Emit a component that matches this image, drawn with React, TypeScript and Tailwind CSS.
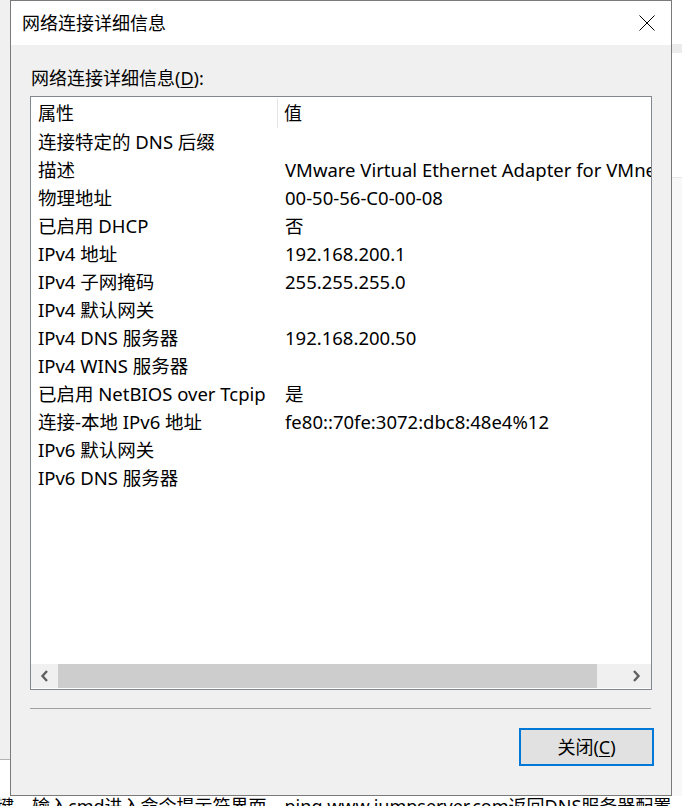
import React from "react";

const rows: [string, string][] = [
  ["连接特定的 DNS 后缀", ""],
  ["描述", "VMware Virtual Ethernet Adapter for VMnet8"],
  ["物理地址", "00-50-56-C0-00-08"],
  ["已启用 DHCP", "否"],
  ["IPv4 地址", "192.168.200.1"],
  ["IPv4 子网掩码", "255.255.255.0"],
  ["IPv4 默认网关", ""],
  ["IPv4 DNS 服务器", "192.168.200.50"],
  ["IPv4 WINS 服务器", ""],
  ["已启用 NetBIOS over Tcpip", "是"],
  ["连接-本地 IPv6 地址", "fe80::70fe:3072:dbc8:48e4%12"],
  ["IPv6 默认网关", ""],
  ["IPv6 DNS 服务器", ""],
];

const font = { fontFamily: "'Noto Sans', 'Noto Sans CJK SC', sans-serif" };

function Chevron({ dir }: { dir: "left" | "right" }) {
  return (
    <svg width="10" height="12" viewBox="0 0 10 12">
      <path
        d={dir === "left" ? "M7 1 L2.5 6 L7 11" : "M3 1 L7.5 6 L3 11"}
        fill="none"
        stroke="#606060"
        strokeWidth="2.4"
      />
    </svg>
  );
}

export default function App() {
  return (
    <div className="relative h-[806px] w-[682px] overflow-hidden bg-white text-[18px] text-black" style={font}>
      <div className="flex h-[796px]">
        {/* page behind, left */}
        <div className="flex w-[10px] flex-col">
          <div className="h-[760px] border-b border-[#b4b4b4] bg-[#f0f0f0]" />
          <div className="flex-1 bg-white" />
        </div>

        {/* dialog */}
        <div className="flex w-[662px] flex-col border border-[#7a7a7a] bg-[#f0f0f0]">
          <div className="flex h-[44px] shrink-0 items-center justify-between bg-white pl-[11px] pr-[16px]">
            <span className="leading-none">网络连接详细信息</span>
            <svg width="16" height="16" viewBox="0 0 16 16">
              <path d="M0.5 0.5 L15.5 15.5 M15.5 0.5 L0.5 15.5" stroke="#000" strokeWidth="1" />
            </svg>
          </div>

          <div className="flex flex-1 flex-col pl-[19px] pr-[19px]">
            <div className="mt-[19px] h-[32px] pl-[1px] leading-[28px]">
              网络连接详细信息(<span className="underline underline-offset-2">D</span>):
            </div>

            <div className="flex h-[594px] flex-col border border-[#828790] bg-white">
              <div className="flex-1 overflow-hidden pt-[1px]">
                <div className="flex h-[30px] items-center">
                  <div className="w-[247px] border-r border-[#e5e5e5] pl-[7px] leading-[30px]">属性</div>
                  <div className="pl-[6px] leading-[30px]">值</div>
                </div>
                {rows.map(([k, v]) => (
                  <div key={k} className="flex h-[28px] items-center whitespace-nowrap text-[18.5px]">
                    <div className="w-[248px] shrink-0 pl-[7px]">{k}</div>
                    <div className="pl-[6px]">{v}</div>
                  </div>
                ))}
              </div>
              <div className="mb-[1px] flex h-[24px] shrink-0 items-stretch bg-[#f0f0f0]">
                <div className="flex w-[27px] items-center justify-center">
                  <Chevron dir="left" />
                </div>
                <div className="w-[539px] bg-[#cdcdcd]" />
                <div className="flex-1" />
                <div className="flex w-[30px] items-center justify-center">
                  <Chevron dir="right" />
                </div>
              </div>
            </div>

            <div className="mt-[18px] mr-[1px] h-px bg-[#a0a0a0]" />

            <div className="mt-[19px] flex justify-end">
              <button className="-mr-[2px] flex h-[38px] w-[135px] items-center justify-center border-2 border-[#0078d7] bg-[#e1e1e1]">
                关闭(<span className="underline underline-offset-2">C</span>)
              </button>
            </div>
          </div>
        </div>

        {/* page behind, right */}
        <div className="flex w-[10px] flex-col">
          <div className="h-[44px] bg-white" />
          <div className="h-[9px] bg-[#ececec]" />
          <div className="h-[124px] bg-white" />
          <div className="flex-1 border-t border-[#e8e8e8] bg-[#f8f8f8]" />
        </div>
      </div>

      <div className="-ml-[4px] whitespace-nowrap text-[18px] leading-[20px]">
        键，输入cmd进入命令提示符界面，ping www.jumpserver.com返回DNS服务器配置
      </div>
    </div>
  );
}
